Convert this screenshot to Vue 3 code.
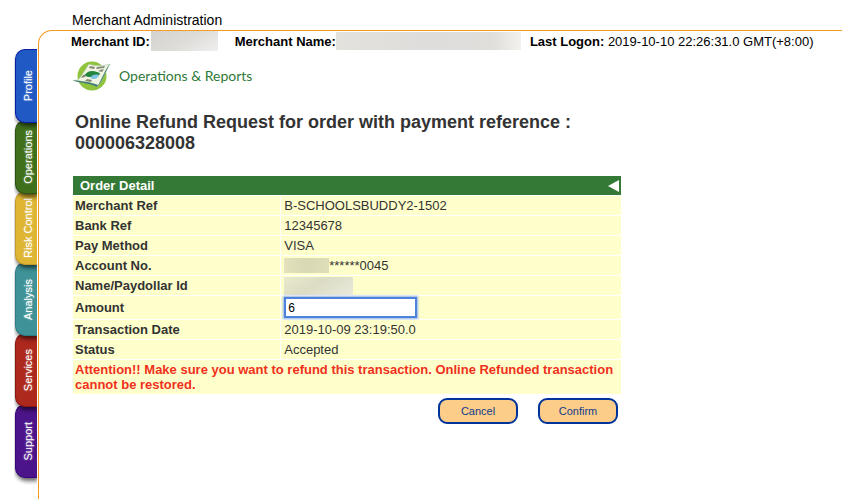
<template>
    <div class="page">
        <nav class="side-menu">
            <a v-for="(tab, index) in tabs" :key="tab.name" href="#" class="tab" :class="tab.color"
                :style="{ zIndex: tabs.length - index }" @click.prevent>
                <span>{{ tab.name }}</span>
            </a>
        </nav>
        <div class="main">
            <div class="site-title">Merchant Administration</div>
            <div class="frame">
                <div class="merchant-info">
                    <b>Merchant ID:</b><span class="mask mask-id"></span>
                    <b class="name-label">Merchant Name:</b><span class="mask mask-name"></span>
                    <span class="logon"><b>Last Logon:</b> 2019-10-10 22:26:31.0 GMT(+8:00)</span>
                </div>
                <div class="section">
                    <svg class="section-icon" width="40" height="32" viewBox="0 0 40 32">
                        <circle cx="19" cy="16" r="14.5" fill="#8fc43c" />
                        <path d="M0 20.500L5 20C10 14 13 8 16 4C22 6 30 6 37 4C33 10 30 21 24 27C18 23 10 23 0 20.500Z"
                            fill="#f1f4e2" stroke="#9dbd9a" stroke-width="0.500" />
                        <path d="M0 20.500C9 23.500 17 23 24 27L25 25C18 22 10 21.500 4 20.500Z" fill="#3d7d70" />
                        <path d="M37 4C33 10 30 21 24 27C29 19 32 9 37 4Z" fill="#4c8878" />
                        <path d="M17 6L22 7L21 9L16 8ZM24 7L32 6L31 8L23 9ZM27 10L31 9L29 12L25 11ZM10 15L14 14L12 17L8 18ZM14 19L19 20L18 22L12 21Z"
                            fill="#858a78" />
                        <path d="M12 15C14 11 19 10 24 12C29 13 27 16 22 16C18 17 14 18 12 15Z" fill="#24853f" />
                        <path d="M17 18C19 14 24 14 26 15C25 19 21 20 17 18Z" fill="#83c4e5" />
                    </svg>
                    <span>Operations &amp; Reports</span>
                </div>
                <form class="content" @submit.prevent>
                    <h1>Online Refund Request for order with payment reference : 000006328008</h1>
                    <table class="detail">
                        <thead>
                            <tr>
                                <th colspan="2">
                                    <div class="detail-head">
                                        Order Detail
                                        <svg width="12" height="12" viewBox="0 0 12 12">
                                            <path d="M0 6L11 0V12Z" fill="#fff" />
                                        </svg>
                                    </div>
                                </th>
                            </tr>
                        </thead>
                        <tbody>
                            <tr v-for="row in rows" :key="row.label">
                                <th scope="row">
                                    <label v-if="row.input" for="amount">{{ row.label }}</label>
                                    <template v-else>{{ row.label }}</template>
                                </th>
                                <td>
                                    <input v-if="row.input" id="amount" v-model="amount" type="text">
                                    <div v-else class="value">
                                        <span v-if="row.mask" class="mask" :class="row.mask"></span>{{ row.value }}
                                    </div>
                                </td>
                            </tr>
                            <tr>
                                <td colspan="2" class="attention">
                                    Attention!! Make sure you want to refund this transaction. Online Refunded transaction cannot be restored.
                                </td>
                            </tr>
                        </tbody>
                    </table>
                    <div class="buttons">
                        <button type="button">Cancel</button>
                        <button type="submit">Confirm</button>
                    </div>
                </form>
            </div>
        </div>
    </div>
</template>

<script setup>
import { ref } from 'vue';

const amount = ref('6');

const tabs = [
    { name: 'Profile', color: 'blue' },
    { name: 'Operations', color: 'green' },
    { name: 'Risk Control', color: 'yellow' },
    { name: 'Analysis', color: 'teal' },
    { name: 'Services', color: 'red' },
    { name: 'Support', color: 'purple' },
];

const rows = [
    { label: 'Merchant Ref', value: 'B-SCHOOLSBUDDY2-1502' },
    { label: 'Bank Ref', value: '12345678' },
    { label: 'Pay Method', value: 'VISA' },
    { label: 'Account No.', value: '******0045', mask: 'mask-account' },
    { label: 'Name/Paydollar Id', value: '', mask: 'mask-holder' },
    { label: 'Amount', input: true },
    { label: 'Transaction Date', value: '2019-10-09 23:19:50.0' },
    { label: 'Status', value: 'Accepted' },
];
</script>

<style>
body {
    background: #fff;
}
</style>

<style scoped>
.page {
    display: flex;
    min-height: 100vh;
    font-family: "Liberation Sans", Arial, sans-serif;
    font-size: 13px;
    line-height: 15px;
    color: #333;
}

.side-menu {
    display: flex;
    flex-direction: column;
    flex-shrink: 0;
    width: 22px;
    padding: 49px 1px 0 15px;
}

.tab {
    position: relative;
    box-sizing: border-box;
    display: flex;
    align-items: center;
    justify-content: center;
    height: 74px;
    margin-bottom: -3px;
    padding-left: 4px;
    border: 1px solid;
    border-right: none;
    border-radius: 10px 0 0 10px;
    box-shadow: 1px 3px 4px rgba(0, 0, 0, 0.6);
    clip-path: inset(0 0 -8px -1px);
    color: #fff;
    font-size: 11px;
    text-decoration: none;
    text-shadow: 0 0 2px rgba(255, 255, 255, 0.5);
    white-space: nowrap;
}

.tab span {
    writing-mode: vertical-rl;
    transform: rotate(180deg);
}

.blue {
    background: #2058c4;
    border-color: #0820a8;
}

.green {
    background: #40701c;
    border-color: #2c5410;
}

.yellow {
    background: #dfb534;
    border-color: #c49a28;
}

.teal {
    background: #3f9297;
    border-color: #2c7c84;
}

.red {
    background: #ad281d;
    border-color: #8c1610;
}

.purple {
    background: #4c1489;
    border-color: #36087c;
}

.main {
    flex: 1;
    min-width: 0;
    display: flex;
    flex-direction: column;
}

.site-title {
    padding: 12px 0 2px 34px;
    font-size: 14px;
    line-height: 16px;
    color: #000;
}

.frame {
    flex: 1;
    border-top: 1px solid #f59a22;
    border-left: 1px solid #f59a22;
    border-top-left-radius: 14px;
}

.merchant-info {
    display: flex;
    align-items: center;
    height: 20px;
    padding-left: 32px;
    color: #000;
    white-space: nowrap;
}

.name-label {
    margin-left: 17px;
}

.logon {
    margin-left: 9px;
}

.mask {
    flex-shrink: 0;
    display: block;
}

.mask-id {
    width: 67px;
    height: 20px;
    margin-left: 1px;
    background: linear-gradient(150deg, #d5d3cf, #dedcd9 50%, #f0efed);
}

.mask-name {
    width: 185px;
    height: 18px;
    background: linear-gradient(90deg, #e4e2dd, #dedddb 50%, #e0dfdc 85%, #f4f1ed);
}

.mask-account {
    width: 45px;
    height: 15px;
    background: linear-gradient(90deg, #e3e2bd, #d9d8b4 50%, #dfdeb9);
}

.mask-holder {
    width: 69px;
    height: 18px;
    background: linear-gradient(150deg, #e9e9cb, #dcdcc5 45%, #e8eadb);
}

.section {
    display: flex;
    align-items: center;
    gap: 6px;
    padding: 9px 0 0 34px;
    color: #2f7a38;
    font-family: Lato, sans-serif;
    font-size: 14px;
    line-height: 20px;
}

.content {
    max-width: 548px;
    padding: 20px 12px 0 34px;
}

h1 {
    margin: 0 0 22px;
    padding: 0 2px;
    font-size: 18px;
    line-height: 21px;
}

.detail {
    width: 100%;
    border-spacing: 0;
}

.detail th,
.detail td {
    padding: 2px;
    border-bottom: 1px solid #fff;
    background: #ffffcc;
    text-align: left;
}

.detail tbody th {
    width: 38%;
    border-right: 1px solid #fff;
}

.detail thead th {
    padding: 2px 1px 2px 7px;
    background: #347a36;
    color: #fff;
}

.detail-head {
    display: flex;
    align-items: center;
    justify-content: space-between;
}

.value {
    display: flex;
    align-items: center;
    height: 15px;
    padding-left: 1px;
}

#amount {
    display: block;
    box-sizing: border-box;
    width: 131px;
    height: 19px;
    margin-left: 2px;
    padding: 1px 2px;
    border: 1px solid #4f82dc;
    outline: 1px solid #4f82dc;
    box-shadow: 0 0 2px 2px #8fb2ee;
    background: #fff;
    font-family: inherit;
    font-size: 12px;
    color: #000;
}

.detail .attention {
    padding: 2px;
    color: #f0301c;
    font-weight: bold;
}

.buttons {
    display: flex;
    justify-content: flex-end;
    gap: 20px;
    padding: 3px 3px 0 0;
}

button {
    width: 80px;
    height: 26px;
    padding: 0;
    border: 2px solid #003399;
    border-radius: 9px;
    background: #fbcd88;
    color: #123a8c;
    font-family: inherit;
    font-size: 11px;
    cursor: pointer;
}
</style>
